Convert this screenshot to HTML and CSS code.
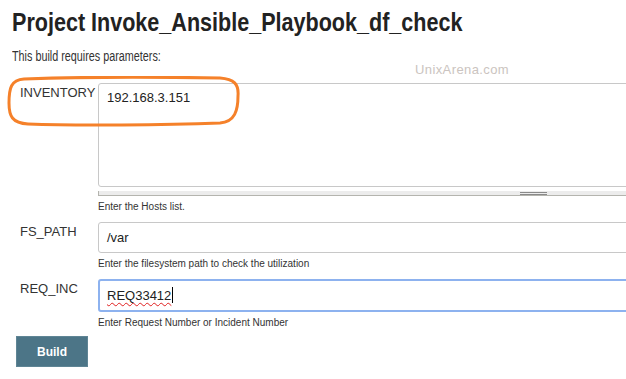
FILE: index.html
```html
<!DOCTYPE html>
<html lang="en">
<head>
    <meta charset="UTF-8">
    <title>Project Invoke_Ansible_Playbook_df_check</title>
    <link rel="stylesheet" href="styles.css">
</head>
<body>

    <main class="page">
        <h1>Project Invoke_Ansible_Playbook_df_check</h1>
        <p class="intro">This build requires parameters:</p>

        <div class="watermark">UnixArena.com</div>

        <form class="params">
            <div class="label">INVENTORY</div>
            <div class="field">
                <div class="box textarea">192.168.3.151</div>
                <div class="hscroll"><span class="grip"></span></div>
                <div class="hint">Enter the Hosts list.</div>
            </div>

            <div class="label">FS_PATH</div>
            <div class="field">
                <div class="box">/var</div>
                <div class="hint">Enter the filesystem path to check the utilization</div>
            </div>

            <div class="label">REQ_INC</div>
            <div class="field">
                <div class="box focused"><span class="misspelled">REQ33412</span><span class="caret"></span></div>
                <div class="hint">Enter Request Number or Incident Number</div>
            </div>
        </form>

        <button class="build">Build</button>

        <!-- hand drawn highlight -->
        <svg class="marker" width="236" height="52" viewBox="0 0 236 52">
            <path d="M18 3 C70 1 160 1 214 2 C228 3 233 8 232 20 C232 34 229 46 214 47 C160 49 70 50 22 48 C6 47 3 40 3 27 C3 12 5 4 18 3 Z"
                  fill="none" stroke="#f5812a" stroke-width="3"/>
        </svg>
    </main>

</body>
</html>
```

FILE: styles.css
```css
body {
    margin: 0;
    background-color: #fff;
    font-family: "Liberation Sans", Arial, sans-serif;
    color: #333;
    overflow: hidden;
}

.page {
    position: relative;
    padding: 7px 0 0 12px;
}

h1 {
    margin: 0;
    font-size: 26px;
    line-height: 30px;
    font-weight: bold;
    color: #222;
    white-space: nowrap;
    transform: scaleX(0.829);
    transform-origin: left center;
}

.intro {
    margin: 12px 0 0;
    font-size: 14px;
    line-height: 15px;
    white-space: nowrap;
    transform: scaleX(0.771);
    transform-origin: left center;
}

.watermark {
    position: absolute;
    left: 415px;
    top: 62px;
    font-size: 13px;
    letter-spacing: 0.4px;
    color: #cbc4c0;
}

.params {
    display: grid;
    grid-template-columns: 78px 560px;
    row-gap: 9px;
    margin: 19px 0 0 8px;
}

.label {
    padding-top: 2px;
    font-size: 13px;
    line-height: 15px;
    color: #333;
}

.field {
    display: flex;
    flex-direction: column;
}

.box {
    height: 29px;
    padding: 0 8px;
    border: 1px solid #c8c8c8;
    border-radius: 3px;
    font-size: 13px;
    line-height: 29px;
    color: #222;
}

.textarea {
    height: 96px;
    padding-top: 6px;
    line-height: 16px;
    border-radius: 3px 0 0 3px;
}

.focused {
    height: 29px;
    border: 2px solid #8db2ef;
    padding: 0 7px;
}

.misspelled {
    text-decoration: underline wavy #e02020;
    text-decoration-thickness: 1px;
    text-underline-offset: 2px;
}

.caret {
    display: inline-block;
    width: 1px;
    height: 16px;
    margin-left: 1px;
    vertical-align: -3px;
    background-color: #000;
}

.hscroll {
    position: relative;
    height: 4px;
    margin-top: 4px;
    background-color: #ececec;
    border-left: 1px solid #b4b4ae;
    border-bottom: 1px solid #b4b4ae;
}

.grip {
    position: absolute;
    left: 421px;
    top: 1px;
    width: 27px;
    height: 1px;
    border-top: 1px solid #8a8a8a;
    border-bottom: 1px solid #8a8a8a;
}

.hint {
    margin-top: 5px;
    font-size: 10px;
    line-height: 12px;
    color: #333;
}

.build {
    display: block;
    margin: 7px 0 0 4px;
    width: 72px;
    height: 31px;
    border: 1px solid #5f8595;
    background-color: #4c7587;
    color: #fff;
    font-family: "Liberation Sans", Arial, sans-serif;
    font-size: 12px;
    font-weight: bold;
}

.marker {
    position: absolute;
    left: 6px;
    top: 76px;
}
```
